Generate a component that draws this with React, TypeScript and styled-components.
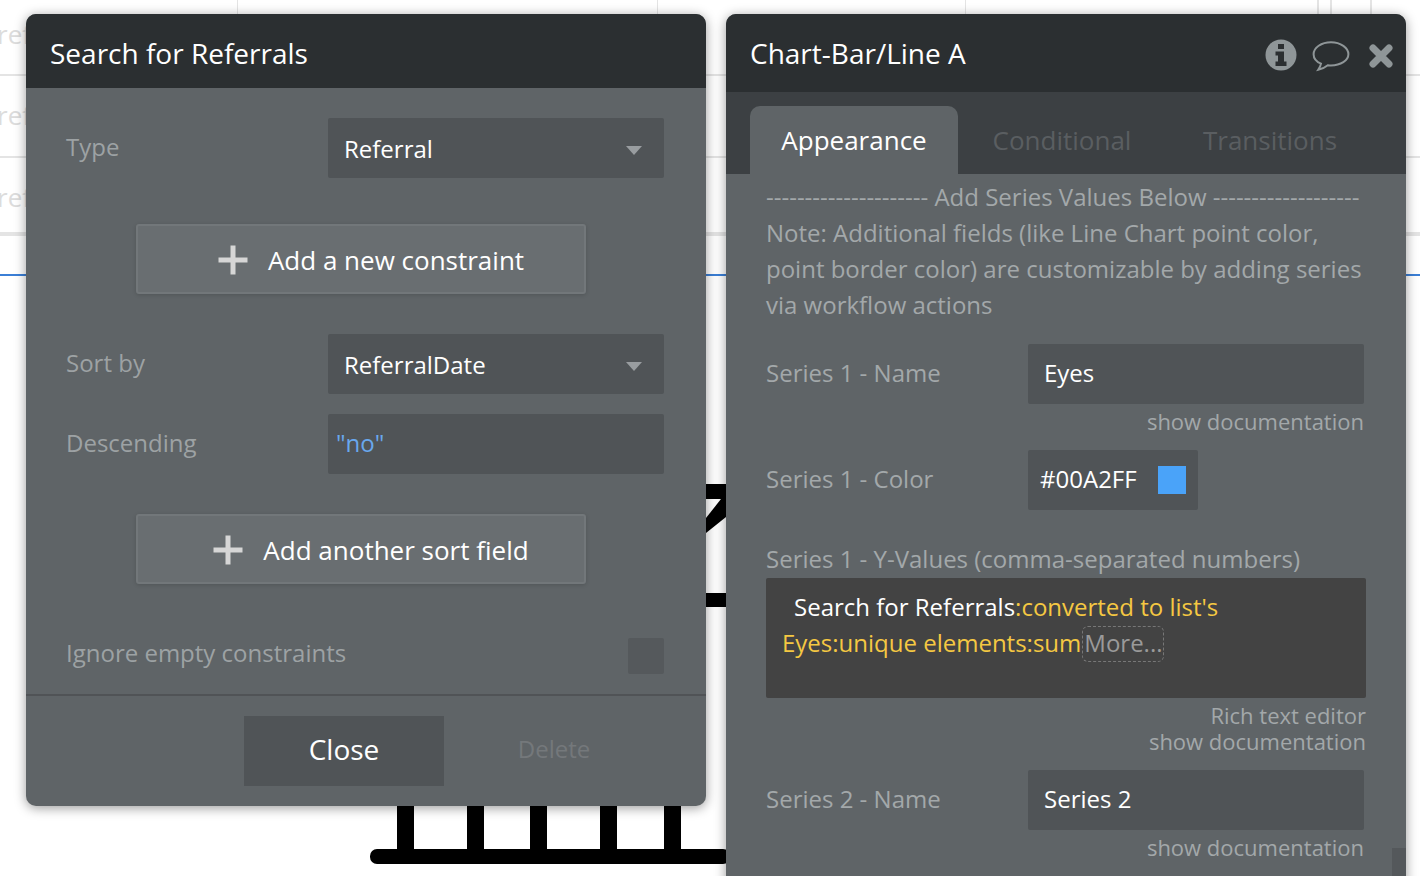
import * as React from "react";
import styled, { createGlobalStyle } from "styled-components";

const GlobalStyle = createGlobalStyle`
  html, body {
    margin: 0;
    padding: 0;
    height: 100%;
    background: #ffffff;
    overflow: hidden;
    font-family: "Open Sans", "Noto Sans", sans-serif;
  }
`;

function InfoIcon() {
  return (
    <InfoGlyph width="32" height="32" viewBox="0 0 32 32">
      <circle cx="16" cy="16" r="15.5" fill="#8f9698" />
      <path d="M13 5h6v5h-6z M10.500 12.500h8.500v10h2.500v4.500H10.500v-4.500H13v-6h-2.500z" fill="#2b2f31" />
    </InfoGlyph>
  );
}

function BubbleIcon() {
  return (
    <svg width="38" height="32" viewBox="0 0 38 32">
      <path
        d="M19 2.200C9.300 2.200 1.600 7.600 1.600 14.200c0 4.400 3 7.600 7.400 9.400-.4 2.200-1.300 4-2.800 6.200 3.600-.6 6.800-2.400 9.600-4.600 1 .1 2.100.2 3.200.2 9.700 0 17.400-5 17.400-11.200S28.700 2.200 19 2.200z"
        fill="none"
        stroke="#8f9698"
        strokeWidth="2"
      />
    </svg>
  );
}

function CloseIcon() {
  return (
    <svg width="26" height="26" viewBox="0 0 26 26">
      <path d="M5 5l16 16M21 5L5 21" stroke="#8f9698" strokeWidth="7" strokeLinecap="round" />
    </svg>
  );
}

function PlusIcon() {
  return (
    <svg width="30" height="30" viewBox="0 0 30 30">
      <path d="M12.500 0.500h5v12h12v5h-12v12h-5v-12h-12v-5h12z" fill="#d6d6d6" />
    </svg>
  );
}

function Select({ value }: { value: string }) {
  return (
    <SelectBox>
      <span>{value}</span>
      <Caret />
    </SelectBox>
  );
}

export default function App() {
  return (
    <Canvas>
      <GlobalStyle />
      <Backdrop width="1420" height="876" viewBox="0 0 1420 876">
        <g fill="#e4e4e4">
          <rect x="0" y="74" width="1420" height="2" />
          <rect x="0" y="156" width="1420" height="2" />
          <rect x="0" y="232" width="1420" height="4" />
          <rect x="237" y="0" width="1" height="14" />
          <rect x="657" y="0" width="1" height="14" />
          <rect x="965" y="0" width="1" height="14" />
          <rect x="1317" y="0" width="2" height="14" />
          <rect x="1330" y="0" width="2" height="14" />
          <rect x="1370" y="0" width="2" height="14" />
        </g>
        <rect x="0" y="274" width="1420" height="2" fill="#3b7fd6" />
        <g fill="#000000">
          <rect x="700" y="484" width="30" height="15" />
          <path d="M726 499v18L706 533V518l15-19z" />
          <rect x="700" y="593" width="30" height="14" />
          <rect x="370" y="849" width="360" height="15" rx="7" />
          <rect x="397" y="800" width="17" height="52" />
          <rect x="467" y="800" width="17" height="52" />
          <rect x="530" y="800" width="17" height="52" />
          <rect x="600" y="800" width="17" height="52" />
          <rect x="664" y="800" width="17" height="52" />
        </g>
      </Backdrop>
      <GhostText $top={16}>ref</GhostText>
      <GhostText $top={97}>ref</GhostText>
      <GhostText $top={179}>ref</GhostText>

      <SearchWindow>
        <SearchHeader>Search for Referrals</SearchHeader>
        <SearchBody>
          <FieldRow $top={30}>
            <SearchLabel>Type</SearchLabel>
            <Select value="Referral" />
          </FieldRow>
          <AddButton $top={46}>
            <PlusIcon />
            <span>Add a new constraint</span>
          </AddButton>
          <FieldRow $top={40}>
            <SearchLabel>Sort by</SearchLabel>
            <Select value="ReferralDate" />
          </FieldRow>
          <FieldRow $top={20}>
            <SearchLabel>Descending</SearchLabel>
            <ExpressionBox>"no"</ExpressionBox>
          </FieldRow>
          <AddButton $top={40}>
            <PlusIcon />
            <span>Add another sort field</span>
          </AddButton>
          <CheckRow>
            <CheckLabel>Ignore empty constraints</CheckLabel>
            <CheckBox />
          </CheckRow>
        </SearchBody>
        <SearchFooter>
          <CloseButton>Close</CloseButton>
          <DeleteButton>Delete</DeleteButton>
        </SearchFooter>
      </SearchWindow>

      <EditorWindow>
        <EditorHeader>
          <span>Chart-Bar/Line A</span>
          <HeaderIcons>
            <InfoIcon />
            <BubbleIcon />
            <CloseIcon />
          </HeaderIcons>
        </EditorHeader>
        <TabBar>
          <Tab $active>Appearance</Tab>
          <Tab>Conditional</Tab>
          <Tab>Transitions</Tab>
        </TabBar>
        <EditorBody>
          <NoteText>
            <NoWrap>--------------------- Add Series Values Below -------------------</NoWrap>
            Note: Additional fields (like Line Chart point color, point border color) are customizable by adding series via workflow actions
          </NoteText>
          <PropRow $top={21}>
            <PropLabel>Series 1 - Name</PropLabel>
            <TextField>Eyes</TextField>
          </PropRow>
          <DocLink>show documentation</DocLink>
          <PropRow $top={10}>
            <PropLabel>Series 1 - Color</PropLabel>
            <ColorField>
              <span>#00A2FF</span>
              <Swatch />
            </ColorField>
          </PropRow>
          <StackLabel>Series 1 - Y-Values (comma-separated numbers)</StackLabel>
          <RichBox>
            <RichLine $indent={28}>
              Search for Referrals<Dynamic>:converted to list's</Dynamic>
            </RichLine>
            <RichLine $indent={16}>
              <Dynamic>Eyes:unique elements:sum</Dynamic>
              <MoreTag>More...</MoreTag>
            </RichLine>
          </RichBox>
          <EditorHint>Rich text editor</EditorHint>
          <TightDoc>show documentation</TightDoc>
          <PropRow $top={16}>
            <PropLabel>Series 2 - Name</PropLabel>
            <TextField>Series 2</TextField>
          </PropRow>
          <DocLink>show documentation</DocLink>
        </EditorBody>
        <ScrollThumb />
      </EditorWindow>
    </Canvas>
  );
}

const Canvas = styled.div`
  position: relative;
  width: 1420px;
  height: 876px;
  overflow: hidden;
  background: #ffffff;
  font-family: "Open Sans", "Noto Sans", sans-serif;
`;

const Backdrop = styled.svg`
  position: absolute;
  top: 0;
  left: 0;
`;

const GhostText = styled.span<{ $top: number }>`
  position: absolute;
  left: -3px;
  top: ${(p) => p.$top}px;
  font-size: 26px;
  line-height: 36px;
  color: #dcdcdc;
`;

const Win = styled.div`
  position: absolute;
  width: 680px;
  top: 14px;
  border-radius: 10px;
  background: #5f6467;
  box-shadow: 0 2px 12px rgba(0, 0, 0, 0.4);
  display: flex;
  flex-direction: column;
`;

const SearchWindow = styled(Win)`
  left: 26px;
  height: 792px;
`;

const EditorWindow = styled(Win)`
  left: 726px;
  height: 900px;
`;

const SearchHeader = styled.div`
  height: 74px;
  flex: none;
  box-sizing: border-box;
  display: flex;
  align-items: center;
  padding: 3px 0 0 24px;
  border-radius: 10px 10px 0 0;
  background: #2b2f31;
  color: #ffffff;
  font-size: 28px;
`;

const SearchBody = styled.div`
  flex: 1;
  padding: 0 42px 0 40px;
  display: flex;
  flex-direction: column;
`;

const FieldRow = styled.div<{ $top: number }>`
  display: flex;
  align-items: center;
  justify-content: space-between;
  height: 60px;
  margin-top: ${(p) => p.$top}px;
`;

const SearchLabel = styled.label`
  font-size: 24px;
  color: #9da2a4;
  margin-top: -4px;
`;

const CheckLabel = styled(SearchLabel)`
  margin-top: -8px;
`;

const SelectBox = styled.div`
  width: 336px;
  height: 60px;
  box-sizing: border-box;
  display: flex;
  align-items: center;
  justify-content: space-between;
  padding: 0 22px 0 16px;
  background: #505457;
  border-radius: 2px;
  color: #ffffff;
  font-size: 24px;
`;

const Caret = styled.i`
  width: 0;
  height: 0;
  margin-top: 4px;
  border-left: 8px solid transparent;
  border-right: 8px solid transparent;
  border-top: 9px solid #999da0;
`;

const ExpressionBox = styled(SelectBox)`
  padding: 0 8px 4px;
  color: #69a8ee;
`;

const AddButton = styled.button<{ $top: number }>`
  align-self: flex-start;
  width: 450px;
  height: 70px;
  margin: ${(p) => p.$top}px 0 0 70px;
  display: flex;
  align-items: center;
  justify-content: center;
  gap: 20px;
  box-sizing: border-box;
  padding: 2px 0 0 20px;
  background: #696e71;
  border: 2px solid #72777a;
  border-radius: 3px;
  box-shadow: 0 1px 4px rgba(0, 0, 0, 0.15);
  color: #ffffff;
  font-family: inherit;
  font-size: 26px;
`;

const CheckRow = styled.div`
  display: flex;
  align-items: center;
  justify-content: space-between;
  height: 36px;
  margin-top: 54px;
`;

const CheckBox = styled.div`
  width: 36px;
  height: 36px;
  background: #55595c;
  border-radius: 2px;
`;

const SearchFooter = styled.div`
  height: 112px;
  flex: none;
  box-sizing: border-box;
  display: flex;
  align-items: flex-start;
  padding: 20px 0 0 218px;
  border-top: 2px solid #505356;
  border-radius: 0 0 10px 10px;
`;

const CloseButton = styled.button`
  width: 200px;
  height: 70px;
  padding: 0 0 4px;
  border: none;
  background: #505457;
  color: #ffffff;
  font-family: inherit;
  font-size: 28px;
`;

const DeleteButton = styled.button`
  width: 220px;
  height: 70px;
  padding: 0 0 6px;
  border: none;
  background: transparent;
  color: #74787b;
  font-family: inherit;
  font-size: 24px;
`;

const EditorHeader = styled.div`
  height: 78px;
  flex: none;
  box-sizing: border-box;
  display: flex;
  align-items: center;
  justify-content: space-between;
  padding: 0 12px 0 24px;
  border-radius: 10px 10px 0 0;
  background: #2b2f31;
  color: #ffffff;
  font-size: 28px;
`;

const HeaderIcons = styled.div`
  display: flex;
  align-items: center;
  gap: 18px;
  margin-top: 6px;
`;

const InfoGlyph = styled.svg`
  margin-right: -3px;
  margin-top: -2px;
`;

const TabBar = styled.div`
  height: 82px;
  flex: none;
  box-sizing: border-box;
  display: flex;
  align-items: flex-end;
  padding-left: 24px;
  background: #3c4043;
`;

const Tab = styled.div<{ $active?: boolean }>`
  height: 68px;
  width: 208px;
  display: flex;
  align-items: center;
  justify-content: center;
  box-sizing: border-box;
  border-radius: 10px 10px 0 0;
  background: ${(p) => (p.$active ? "#5f6467" : "transparent")};
  color: ${(p) => (p.$active ? "#ffffff" : "#5a5e61")};
  font-size: 26px;
`;

const EditorBody = styled.div`
  padding: 5px 42px 0 40px;
  display: flex;
  flex-direction: column;
`;

const NoteText = styled.div`
  font-size: 24px;
  line-height: 36px;
  color: #a3a8aa;
`;

const NoWrap = styled.div`
  white-space: nowrap;
`;

const PropRow = styled.div<{ $top: number }>`
  display: flex;
  align-items: center;
  height: 60px;
  margin-top: ${(p) => p.$top}px;
`;

const PropLabel = styled.label`
  width: 262px;
  flex: none;
  margin-top: -4px;
  font-size: 24px;
  color: #a3a8aa;
`;

const TextField = styled.div`
  width: 336px;
  height: 60px;
  box-sizing: border-box;
  display: flex;
  align-items: center;
  padding: 0 0 4px 16px;
  background: #505457;
  border-radius: 2px;
  color: #ffffff;
  font-size: 24px;
`;

const ColorField = styled(TextField)`
  width: 170px;
  justify-content: space-between;
  padding: 0 12px 4px;
`;

const Swatch = styled.div`
  width: 28px;
  height: 28px;
  margin-top: 4px;
  background: #4aa3f9;
`;

const DocLink = styled.div`
  height: 36px;
  line-height: 34px;
  text-align: right;
  font-size: 22px;
  color: #a3a8aa;
`;

const TightDoc = styled.div`
  margin-right: -2px;
  height: 26px;
  line-height: 26px;
  text-align: right;
  font-size: 22px;
  color: #a3a8aa;
`;

const EditorHint = styled(TightDoc)`
  margin-top: 4px;
`;

const StackLabel = styled.div`
  margin-top: 31px;
  font-size: 24px;
  line-height: 36px;
  color: #a3a8aa;
  white-space: nowrap;
`;

const RichBox = styled.div`
  width: 600px;
  height: 120px;
  box-sizing: border-box;
  margin: 1px -2px 0 0;
  padding-top: 11px;
  background: #434343;
  border-radius: 2px;
  font-size: 24px;
  line-height: 36px;
  color: #ffffff;
`;

const RichLine = styled.div<{ $indent: number }>`
  padding-left: ${(p) => p.$indent}px;
  white-space: nowrap;
`;

const Dynamic = styled.span`
  color: #f5c842;
`;

const MoreTag = styled.span`
  display: inline-block;
  height: 36px;
  margin-left: 1px;
  padding: 0 0 0 1px;
  border: 1px dashed #777777;
  border-radius: 6px;
  box-sizing: border-box;
  line-height: 32px;
  color: #9a9a9a;
`;

const ScrollThumb = styled.div`
  position: absolute;
  right: 0;
  top: 834px;
  width: 14px;
  height: 40px;
  background: #54585b;
`;
